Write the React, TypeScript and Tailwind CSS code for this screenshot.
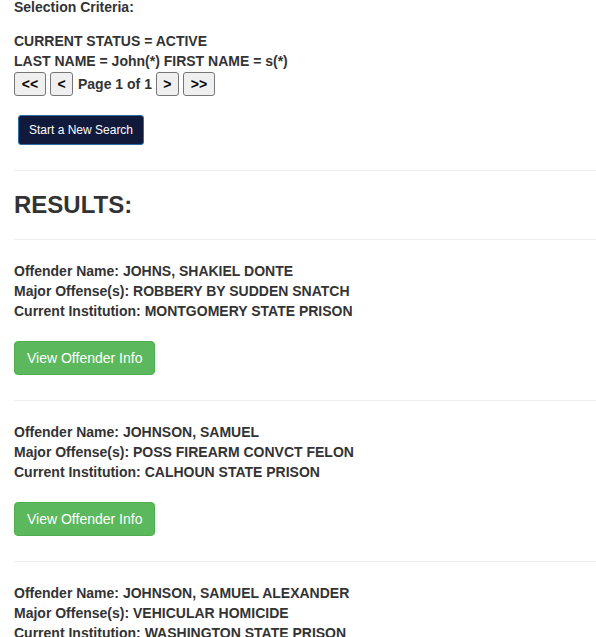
import React from 'react'

interface Offender {
  name: string
  offense: string
  institution: string
}

const offenders: Offender[] = [
  { name: 'JOHNS, SHAKIEL DONTE', offense: 'ROBBERY BY SUDDEN SNATCH', institution: 'MONTGOMERY STATE PRISON' },
  { name: 'JOHNSON, SAMUEL', offense: 'POSS FIREARM CONVCT FELON', institution: 'CALHOUN STATE PRISON' },
  { name: 'JOHNSON, SAMUEL ALEXANDER', offense: 'VEHICULAR HOMICIDE', institution: 'WASHINGTON STATE PRISON' },
]

function PagerButton({ label, wide }: { label: string; wide?: boolean }) {
  return (
    <button
      type="button"
      className={`${wide ? 'w-[32px]' : 'w-[23px]'} h-[24px] p-0 bg-[#efefef] border border-[#767676] rounded-[3px] font-bold text-[14px] leading-[20px] text-black`}
    >
      {label}
    </button>
  )
}

export default function App() {
  return (
    <div className="h-[637px] overflow-hidden bg-white text-[#333] text-[14px] leading-[20px] font-['Liberation_Sans',Arial,sans-serif]">
      <div className="pl-[14px] -mt-[3px]">
        <div className="font-bold">Selection Criteria:</div>
        <div className="font-bold mt-[14px]">CURRENT STATUS = ACTIVE</div>
        <div className="font-bold">LAST NAME = John(*) FIRST NAME = s(*)</div>
        <div className="flex items-center gap-[4px] mt-[1px]">
          <PagerButton label="<<" wide />
          <PagerButton label="<" />
          <span className="font-bold ml-[1px]">Page 1 of 1</span>
          <PagerButton label=">" />
          <PagerButton label=">>" wide />
        </div>
        <button
          type="button"
          className="ml-[4px] mt-[19px] h-[30px] px-[10px] bg-[#111a3b] border border-[#2e6da4] rounded-[3px] text-white text-[12px] leading-[18px]"
        >
          Start a New Search
        </button>
        <div className="mt-[25px] border-t border-[#eee]" />
        <h3 className="mt-[21px] text-[24px] leading-[26px] font-bold text-[#333]">RESULTS:</h3>
        <div className="mt-[21px] border-t border-[#eee]" />
        {offenders.map(o => (
          <div key={o.name}>
            <div className="pt-[21px] font-bold">
              <div>Offender Name: {o.name}</div>
              <div>Major Offense(s): {o.offense}</div>
              <div>Current Institution: {o.institution}</div>
            </div>
            <button
              type="button"
              className="mt-[20px] h-[34px] px-[12px] bg-[#5cb85c] border border-[#4cae4c] rounded-[4px] text-white text-[14px] leading-[20px]"
            >
              View Offender Info
            </button>
            <div className="mt-[25px] border-t border-[#eee]" />
          </div>
        ))}
      </div>
    </div>
  )
}
